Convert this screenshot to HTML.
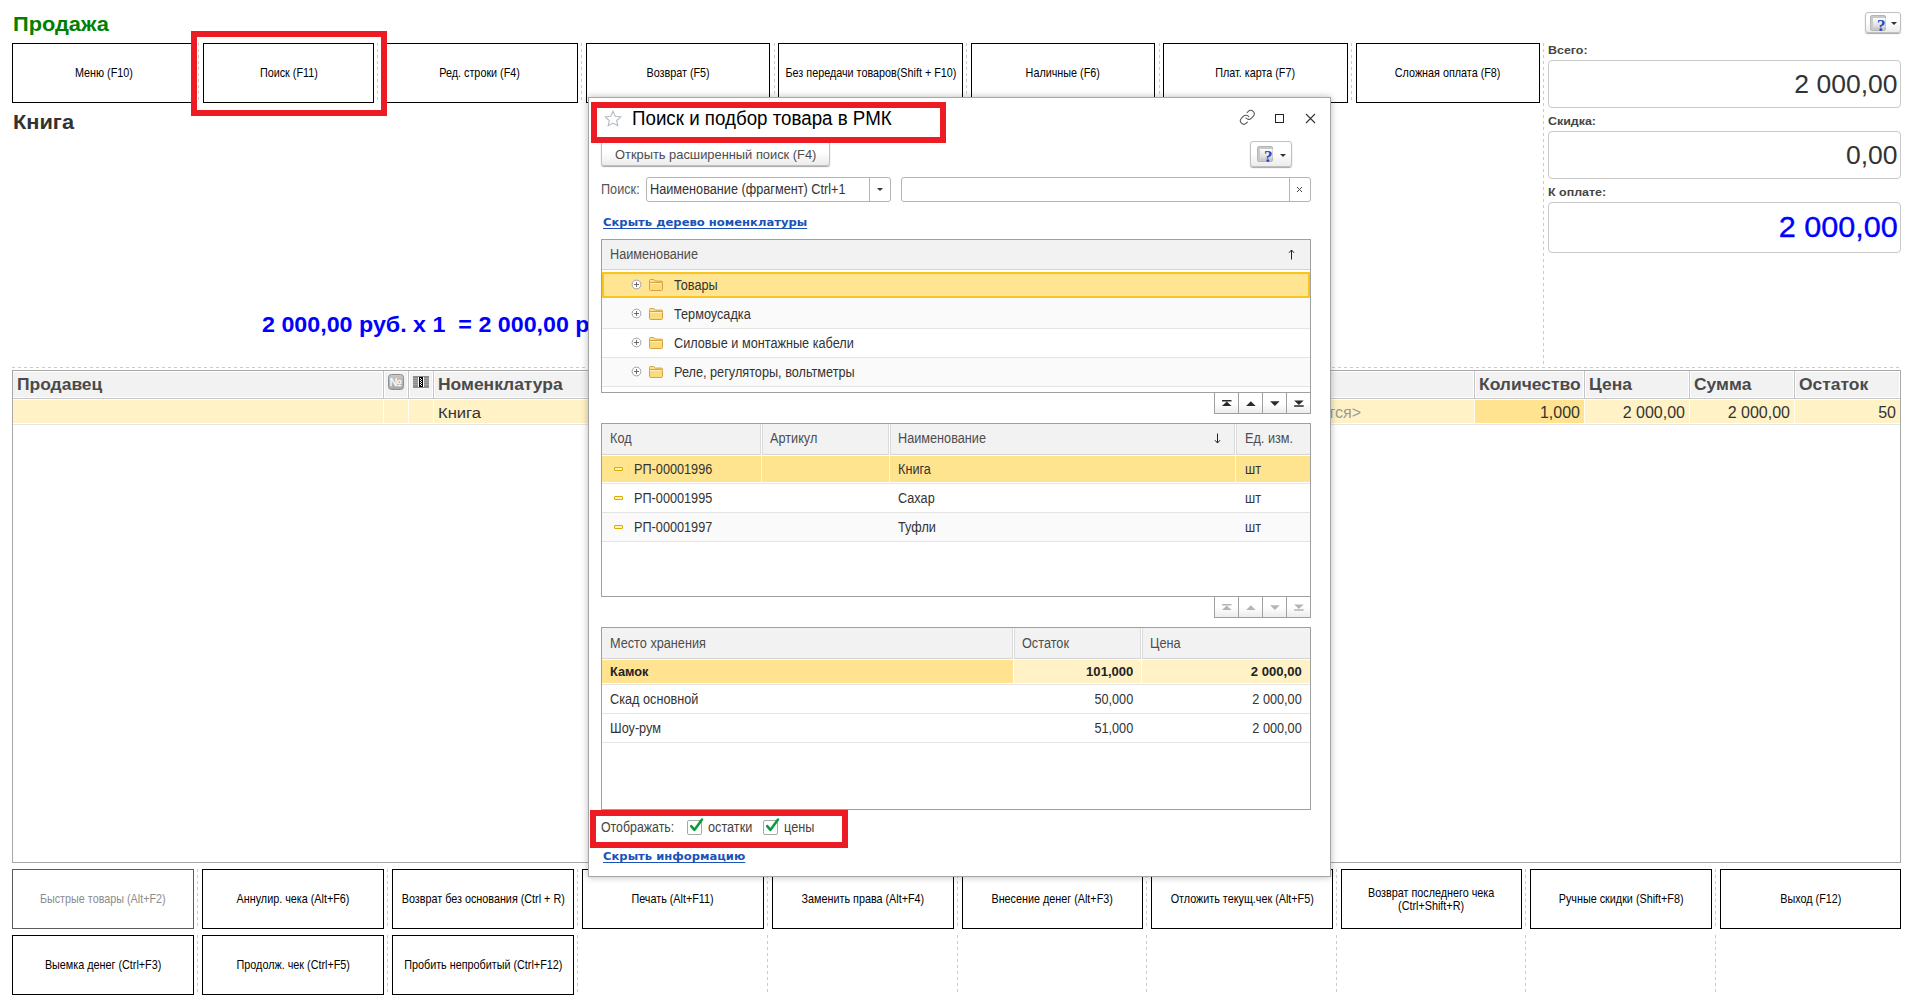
<!DOCTYPE html>
<html lang="ru"><head><meta charset="utf-8"><title>Продажа</title>
<style>
html,body{margin:0;padding:0;background:#fff;}
body{font-family:"Liberation Sans",sans-serif;font-size:13px;color:#333;}
#root{position:relative;width:1920px;height:1005px;overflow:hidden;background:#fff;}
#root div{box-sizing:border-box;}
.pb{position:absolute;border:1px solid #000;background:#fff;display:flex;align-items:center;justify-content:center;text-align:center;font-size:13px;line-height:13px;color:#000;}
.pb span{display:inline-block;transform:scaleX(0.83);white-space:nowrap;position:relative;top:-1px;}
.pb.dis{border-color:#5a5a5a;color:#8c8c8c;}
.vd{position:absolute;width:1px;background:repeating-linear-gradient(to bottom,#cacaca 0,#cacaca 3px,transparent 3px,transparent 6px);}
.hd{position:absolute;height:1px;background:repeating-linear-gradient(to right,#cacaca 0,#cacaca 3px,transparent 3px,transparent 6px);}
.fld{position:absolute;border:1px solid #c8c8c8;border-radius:4px;background:#fff;}
.th{position:absolute;background:#f2f2f2;}
.red{position:absolute;border:6px solid #ed1c24;}
.tbl{position:absolute;border:1px solid #a0a0a0;background:#fff;}
.hl{position:absolute;height:1px;background:#e4e4e4;}
.vl{position:absolute;width:1px;}
.nav{position:absolute;border:1px solid #a0a0a0;background:linear-gradient(#fff,#fff 50%,#ececec);}
.gbtn{position:absolute;border:1px solid #c0c0c0;border-radius:3px;background:linear-gradient(#fff,#fff 45%,#ececec);box-shadow:0 1px 1px rgba(0,0,0,.35);}
</style></head><body><div id="root">

<div style="position:absolute;top:14.27px;font-size:20px;line-height:20px;color:#008000;white-space:pre;font-weight:bold;left:13.00px;transform:scaleX(1.09);transform-origin:left center;">Продажа</div>
<div style="position:absolute;top:112.07px;font-size:20px;line-height:20px;color:#333;white-space:pre;font-weight:bold;left:13.00px;transform:scaleX(1.09);transform-origin:left center;">Книга</div>
<div style="position:absolute;top:314.38px;font-size:22px;line-height:22px;color:#0000ff;white-space:pre;font-weight:bold;left:262.00px;transform:scaleX(1.057);transform-origin:left center;">2 000,00 руб. x 1  = 2 000,00 руб.</div>
<div class="pb" style="left:12px;top:43px;width:183px;height:60px"><span>Меню (F10)</span></div>
<div class="pb" style="left:203px;top:43px;width:171px;height:60px"><span>Поиск (F11)</span></div>
<div class="pb" style="left:382px;top:43px;width:196px;height:60px"><span>Ред. строки (F4)</span></div>
<div class="pb" style="left:586px;top:43px;width:184px;height:60px"><span>Возврат (F5)</span></div>
<div class="pb" style="left:778px;top:43px;width:185px;height:60px"><span>Без передачи товаров(Shift + F10)</span></div>
<div class="pb" style="left:971px;top:43px;width:184px;height:60px"><span>Наличные (F6)</span></div>
<div class="pb" style="left:1163px;top:43px;width:185px;height:60px"><span>Плат. карта (F7)</span></div>
<div class="pb" style="left:1356px;top:43px;width:184px;height:60px"><span>Сложная оплата (F8)</span></div>
<div class="vd" style="left:198px;top:43px;height:60px"></div>
<div class="vd" style="left:377px;top:43px;height:60px"></div>
<div class="vd" style="left:581px;top:43px;height:60px"></div>
<div class="vd" style="left:774px;top:43px;height:60px"></div>
<div class="vd" style="left:966px;top:43px;height:60px"></div>
<div class="vd" style="left:1159px;top:43px;height:60px"></div>
<div class="vd" style="left:1351px;top:43px;height:60px"></div>
<div class="vd" style="left:1543px;top:43px;height:321px"></div>
<div class="hd" style="left:12px;top:367px;width:1889px"></div>
<div style="position:absolute;top:45.19px;font-size:11px;line-height:11px;color:#444;white-space:pre;font-weight:bold;left:1548.00px;transform:scaleX(1.13);transform-origin:left center;">Всего:</div>
<div style="position:absolute;top:116.09px;font-size:11px;line-height:11px;color:#444;white-space:pre;font-weight:bold;left:1548.00px;transform:scaleX(1.13);transform-origin:left center;">Скидка:</div>
<div style="position:absolute;top:187.09px;font-size:11px;line-height:11px;color:#444;white-space:pre;font-weight:bold;left:1548.00px;transform:scaleX(1.13);transform-origin:left center;">К оплате:</div>
<div class="fld" style="left:1548px;top:60px;width:353px;height:48px"></div>
<div class="fld" style="left:1548px;top:131px;width:353px;height:48px"></div>
<div class="fld" style="left:1548px;top:202px;width:353px;height:51px"></div>
<div style="position:absolute;top:71.07px;font-size:26.5px;line-height:26.5px;color:#333;white-space:pre;right:22.50px;">2 000,00</div>
<div style="position:absolute;top:142.17px;font-size:26.5px;line-height:26.5px;color:#333;white-space:pre;right:22.50px;">0,00</div>
<div style="position:absolute;top:212.95px;font-size:29px;line-height:29px;color:#0000ff;white-space:pre;right:22.50px;transform:scaleX(1.055);transform-origin:right center;-webkit-text-stroke:0.35px #0000ff;">2 000,00</div>
<div class="gbtn" style="left:1865px;top:12px;width:36px;height:21px"><svg width="17" height="16" viewBox="0 0 17 16" style="position:absolute;left:4px;top:2px;overflow:visible"><defs><linearGradient id="hg1" x1="0" y1="0" x2="0" y2="1"><stop offset="0" stop-color="#fdfdfd"/><stop offset="1" stop-color="#d8d8d8"/></linearGradient></defs><rect x="0.5" y="0.5" width="15" height="15" rx="1.5" fill="#c9c9c9" stroke="#b5b5b5"/><rect x="3" y="3" width="12.5" height="9.5" fill="url(#hg1)"/><text x="11.3" y="15.5" font-family="Liberation Serif,serif" font-weight="bold" font-size="17" fill="#1f48c8" stroke="#1f48c8" stroke-width="0.1" text-anchor="middle">?</text></svg><div style="position:absolute;left:25px;top:9px;width:0;height:0;border-left:3px solid transparent;border-right:3px solid transparent;border-top:3px solid #333"></div></div>
<div class="tbl" style="left:12px;top:370px;width:1889px;height:493px;border-color:#a8a8a8"></div>
<div class="th" style="left:13px;top:372px;width:369px;height:25px"></div>
<div class="th" style="left:385px;top:372px;width:22px;height:25px"></div>
<div class="th" style="left:410px;top:372px;width:22px;height:25px"></div>
<div class="th" style="left:435px;top:372px;width:1038px;height:25px"></div>
<div class="th" style="left:1476px;top:372px;width:107px;height:25px"></div>
<div class="th" style="left:1586px;top:372px;width:102px;height:25px"></div>
<div class="th" style="left:1691px;top:372px;width:102px;height:25px"></div>
<div class="th" style="left:1796px;top:372px;width:103px;height:25px"></div>
<div class="vl" style="left:383px;top:371px;height:27px;background:#c6c6c6"></div>
<div class="vl" style="left:408px;top:371px;height:27px;background:#c6c6c6"></div>
<div class="vl" style="left:433px;top:371px;height:27px;background:#c6c6c6"></div>
<div class="vl" style="left:1474px;top:371px;height:27px;background:#c6c6c6"></div>
<div class="vl" style="left:1584px;top:371px;height:27px;background:#c6c6c6"></div>
<div class="vl" style="left:1689px;top:371px;height:27px;background:#c6c6c6"></div>
<div class="vl" style="left:1794px;top:371px;height:27px;background:#c6c6c6"></div>
<div style="position:absolute;left:13px;top:398px;width:1887px;height:1px;background:#c6c6c6"></div>
<div style="position:absolute;left:13px;top:400px;width:1887px;height:23px;background:#fff2c6"></div>
<div style="position:absolute;left:1475px;top:400px;width:109px;height:23px;background:#ffe391"></div>
<div class="vl" style="left:383px;top:400px;height:23px;background:#fffdf4"></div>
<div class="vl" style="left:408px;top:400px;height:23px;background:#fffdf4"></div>
<div class="vl" style="left:433px;top:400px;height:23px;background:#fffdf4"></div>
<div class="vl" style="left:1474px;top:400px;height:23px;background:#fffdf4"></div>
<div class="vl" style="left:1584px;top:400px;height:23px;background:#fffdf4"></div>
<div class="vl" style="left:1689px;top:400px;height:23px;background:#fffdf4"></div>
<div class="vl" style="left:1794px;top:400px;height:23px;background:#fffdf4"></div>
<div style="position:absolute;left:13px;top:424px;width:1887px;height:1px;background:#e6e6e6"></div>
<div style="position:absolute;top:377.36px;font-size:16px;line-height:16px;color:#4a4a4a;white-space:pre;font-weight:bold;left:17.30px;transform:scaleX(1.09);transform-origin:left center;">Продавец</div>
<div style="position:absolute;top:377.36px;font-size:16px;line-height:16px;color:#4a4a4a;white-space:pre;font-weight:bold;left:438.30px;transform:scaleX(1.09);transform-origin:left center;">Номенклатура</div>
<div style="position:absolute;top:377.36px;font-size:16px;line-height:16px;color:#4a4a4a;white-space:pre;font-weight:bold;left:1479.00px;transform:scaleX(1.09);transform-origin:left center;">Количество</div>
<div style="position:absolute;top:377.36px;font-size:16px;line-height:16px;color:#4a4a4a;white-space:pre;font-weight:bold;left:1589.00px;transform:scaleX(1.09);transform-origin:left center;">Цена</div>
<div style="position:absolute;top:377.36px;font-size:16px;line-height:16px;color:#4a4a4a;white-space:pre;font-weight:bold;left:1694.00px;transform:scaleX(1.09);transform-origin:left center;">Сумма</div>
<div style="position:absolute;top:377.36px;font-size:16px;line-height:16px;color:#4a4a4a;white-space:pre;font-weight:bold;left:1799.00px;transform:scaleX(1.09);transform-origin:left center;">Остаток</div>
<div style="position:absolute;top:405.48px;font-size:15.5px;line-height:15.5px;color:#333;white-space:pre;left:438.30px;transform:scaleX(1.07);transform-origin:left center;">Книга</div>
<div style="position:absolute;top:405.06px;font-size:16px;line-height:16px;color:#333;white-space:pre;right:340.00px;">1,000</div>
<div style="position:absolute;top:405.06px;font-size:16px;line-height:16px;color:#333;white-space:pre;right:235.00px;">2 000,00</div>
<div style="position:absolute;top:405.06px;font-size:16px;line-height:16px;color:#333;white-space:pre;right:130.00px;">2 000,00</div>
<div style="position:absolute;top:405.06px;font-size:16px;line-height:16px;color:#333;white-space:pre;right:24.00px;">50</div>
<div style="position:absolute;top:405.06px;font-size:16px;line-height:16px;color:#9a9a9a;white-space:pre;right:559.00px;">&lt;не используется&gt;</div>
<svg width="16" height="16" viewBox="0 0 16 16" style="position:absolute;left:388px;top:374px"><defs><linearGradient id="ng" x1="0" y1="0" x2="0" y2="1"><stop offset="0" stop-color="#c8c8c8"/><stop offset="1" stop-color="#a6a6a6"/></linearGradient></defs><rect x="0.5" y="0.5" width="15" height="15" rx="3" fill="url(#ng)" stroke="#8e8e8e"/><text x="1.6" y="12.2" font-family="Liberation Sans,sans-serif" font-size="11.5" fill="#fff" stroke="#fff" stroke-width="0.25">№</text></svg>
<svg width="16" height="12" viewBox="0 0 16 12" style="position:absolute;left:413px;top:376px"><rect x="0" y="0" width="16" height="12" fill="#8c8c8c"/><g stroke="#a4a4a4" stroke-width="1"><path d="M0 2.5h16M0 4.5h16M0 6.5h16M0 8.5h16"/></g><rect x="5" y="1" width="6" height="10" fill="#fff"/><rect x="6" y="1" width="4" height="10" fill="#000"/><g fill="#fff"><rect x="7" y="2" width="1" height="1"/><rect x="8" y="3" width="1" height="1"/><rect x="7" y="4" width="1" height="1"/><rect x="8" y="5" width="1" height="1"/><rect x="7" y="6" width="1" height="1"/><rect x="8" y="7" width="1" height="1"/><rect x="7" y="8" width="1" height="1"/><rect x="8" y="9" width="1" height="1"/></g></svg>
<div class="pb dis" style="left:12px;top:869px;width:182px;height:60px"><span>Быстрые товары (Alt+F2)</span></div>
<div class="pb" style="left:202px;top:869px;width:182px;height:60px"><span>Аннулир. чека (Alt+F6)</span></div>
<div class="pb" style="left:392px;top:869px;width:182px;height:60px"><span>Возврат без основания (Ctrl + R)</span></div>
<div class="pb" style="left:582px;top:869px;width:182px;height:60px"><span>Печать (Alt+F11)</span></div>
<div class="pb" style="left:772px;top:869px;width:182px;height:60px"><span>Заменить права (Alt+F4)</span></div>
<div class="pb" style="left:962px;top:869px;width:181px;height:60px"><span>Внесение денег (Alt+F3)</span></div>
<div class="pb" style="left:1151px;top:869px;width:182px;height:60px"><span>Отложить текущ.чек (Alt+F5)</span></div>
<div class="pb" style="left:1341px;top:869px;width:181px;height:60px"><span><i style="font-style:normal;position:relative;top:1px">Возврат последнего чека<br>(Ctrl+Shift+R)</i></span></div>
<div class="pb" style="left:1530px;top:869px;width:182px;height:60px"><span>Ручные скидки (Shift+F8)</span></div>
<div class="pb" style="left:1720px;top:869px;width:181px;height:60px"><span>Выход (F12)</span></div>
<div class="pb" style="left:12px;top:935px;width:182px;height:60px"><span>Выемка денег (Ctrl+F3)</span></div>
<div class="pb" style="left:202px;top:935px;width:182px;height:60px"><span>Продолж. чек (Ctrl+F5)</span></div>
<div class="pb" style="left:392px;top:935px;width:182px;height:60px"><span>Пробить непробитый (Ctrl+F12)</span></div>
<div class="vd" style="left:197px;top:869px;height:60px"></div><div class="vd" style="left:197px;top:935px;height:60px"></div>
<div class="vd" style="left:387px;top:869px;height:60px"></div><div class="vd" style="left:387px;top:935px;height:60px"></div>
<div class="vd" style="left:577px;top:869px;height:60px"></div><div class="vd" style="left:577px;top:935px;height:60px"></div>
<div class="vd" style="left:767px;top:869px;height:60px"></div><div class="vd" style="left:767px;top:935px;height:60px"></div>
<div class="vd" style="left:957px;top:869px;height:60px"></div><div class="vd" style="left:957px;top:935px;height:60px"></div>
<div class="vd" style="left:1146px;top:869px;height:60px"></div><div class="vd" style="left:1146px;top:935px;height:60px"></div>
<div class="vd" style="left:1336px;top:869px;height:60px"></div><div class="vd" style="left:1336px;top:935px;height:60px"></div>
<div class="vd" style="left:1525px;top:869px;height:60px"></div><div class="vd" style="left:1525px;top:935px;height:60px"></div>
<div class="vd" style="left:1715px;top:869px;height:60px"></div><div class="vd" style="left:1715px;top:935px;height:60px"></div>
<div style="position:absolute;left:588px;top:97px;width:743px;height:780px;background:#fff;border:1px solid #a6a6a6;box-shadow:0 0 7px rgba(0,0,0,.28)"></div>
<svg width="18" height="17" viewBox="0 0 18 17" style="position:absolute;left:604px;top:110px"><path d="M9 1.2l2.3 5 5.4.6-4 3.7 1.1 5.3L9 13.1l-4.8 2.7 1.1-5.3-4-3.7 5.4-.6z" fill="#fff" stroke="#b4bac0" stroke-width="1.1" stroke-linejoin="miter"/></svg>
<div style="position:absolute;top:108.47px;font-size:20px;line-height:20px;color:#000;white-space:pre;left:632.30px;transform:scaleX(0.937);transform-origin:left center;">Поиск и подбор товара в РМК</div>
<svg width="16.6" height="16.6" viewBox="0 0 24 24" style="position:absolute;left:1239.3px;top:109.1px"><g fill="none" stroke="#555" stroke-width="1.5" stroke-linecap="round"><path d="M10 13a5 5 0 0 0 7.54.54l3-3a5 5 0 0 0-7.07-7.07l-1.72 1.71"/><path d="M14 11a5 5 0 0 0-7.54-.54l-3 3a5 5 0 0 0 7.07 7.07l1.71-1.71"/></g></svg>
<div style="position:absolute;left:1275px;top:114px;width:9px;height:9px;border:1px solid #222"></div>
<svg width="11" height="11" viewBox="0 0 11 11" style="position:absolute;left:1305px;top:113px"><path d="M1 1l9 9M10 1l-9 9" stroke="#333" stroke-width="1.1" fill="none"/></svg>
<div class="gbtn" style="left:601px;top:141px;width:229px;height:25px"></div>
<div style="position:absolute;top:147.77px;font-size:13.5px;line-height:13.5px;color:#4d4d4d;white-space:pre;left:615.30px;transform:scaleX(0.953);transform-origin:left center;">Открыть расширенный поиск (F4)</div>
<div class="gbtn" style="left:1250px;top:141px;width:42px;height:26px"><svg width="17" height="16" viewBox="0 0 17 16" style="position:absolute;left:6px;top:4px;overflow:visible"><defs><linearGradient id="hg2" x1="0" y1="0" x2="0" y2="1"><stop offset="0" stop-color="#fdfdfd"/><stop offset="1" stop-color="#d8d8d8"/></linearGradient></defs><rect x="0.5" y="0.5" width="15" height="15" rx="1.5" fill="#c9c9c9" stroke="#b5b5b5"/><rect x="3" y="3" width="12.5" height="9.5" fill="url(#hg2)"/><text x="11.3" y="15.5" font-family="Liberation Serif,serif" font-weight="bold" font-size="17" fill="#1f48c8" stroke="#1f48c8" stroke-width="0.1" text-anchor="middle">?</text></svg><div style="position:absolute;left:29px;top:12px;width:0;height:0;border-left:3px solid transparent;border-right:3px solid transparent;border-top:3px solid #333"></div></div>
<div style="position:absolute;top:183.12px;font-size:13.8px;line-height:13.8px;color:#555;white-space:pre;left:601.40px;transform:scaleX(0.92);transform-origin:left center;">Поиск:</div>
<div class="fld" style="left:646px;top:177px;width:245px;height:25px;border-color:#b4b4b4;border-radius:3px"></div>
<div class="vl" style="left:869px;top:178px;height:23px;background:#b4b4b4"></div>
<div style="position:absolute;left:877px;top:188px;width:0;height:0;border-left:3px solid transparent;border-right:3px solid transparent;border-top:3px solid #333"></div>
<div style="position:absolute;top:183.12px;font-size:13.8px;line-height:13.8px;color:#333;white-space:pre;left:650.20px;transform:scaleX(0.92);transform-origin:left center;">Наименование (фрагмент) Ctrl+1</div>
<div class="fld" style="left:901px;top:177px;width:410px;height:25px;border-color:#b4b4b4;border-radius:3px"></div>
<div class="vl" style="left:1289px;top:178px;height:23px;background:#b4b4b4"></div>
<svg width="7" height="7" viewBox="0 0 7 7" style="position:absolute;left:1296px;top:186px"><path d="M1 1l5 5M6 1l-5 5" stroke="#484848" stroke-width="1" fill="none"/></svg>
<div style="position:absolute;top:217.86px;font-size:10.8px;line-height:10.8px;color:#1a52b8;white-space:pre;font-weight:bold;font-family:'DejaVu Sans', sans-serif;left:603.00px;transform:scaleX(1.072);transform-origin:left center;text-decoration:underline;text-decoration-thickness:1px;text-underline-offset:2px;text-decoration-skip-ink:none;">Скрыть дерево номенклатуры</div>
<div class="tbl" style="left:601px;top:239px;width:710px;height:154px"></div>
<div class="th" style="left:602px;top:240px;width:708px;height:29px"></div>
<div class="hl" style="left:602px;top:269px;width:708px;background:#d4d4d4"></div>
<div style="position:absolute;top:248.32px;font-size:13.8px;line-height:13.8px;color:#4d4d4d;white-space:pre;left:610.20px;transform:scaleX(0.92);transform-origin:left center;">Наименование</div>
<svg width="7" height="11" viewBox="0 0 7 11" style="position:absolute;left:1288px;top:249px"><path d="M3.5 10.5v-9.5M1 3.8l2.5-2.8 2.5 2.8" fill="none" stroke="#222" stroke-width="1"/></svg>
<div style="position:absolute;left:602px;top:272px;width:708px;height:26px;background:#ffe591;border:2px solid #f8c41f"></div>
<div style="position:absolute;left:602px;top:298px;width:708px;height:30px;background:#fafafa"></div>
<div style="position:absolute;left:602px;top:357px;width:708px;height:29px;background:#fafafa"></div>
<div class="hl" style="left:602px;top:328px;width:708px"></div>
<div class="hl" style="left:602px;top:357px;width:708px"></div>
<div class="hl" style="left:602px;top:386px;width:708px"></div>
<svg width="11" height="11" viewBox="0 0 11 11" style="position:absolute;left:631px;top:279px"><circle cx="5.5" cy="5.5" r="4.4" fill="#fff" stroke="#a0a0a0" stroke-width="1"/><path d="M3 5.5h5M5.5 3v5" stroke="#6a6a6a" stroke-width="1"/></svg>
<svg width="14" height="12" viewBox="0 0 14 12" style="position:absolute;left:649px;top:279px"><path d="M0.5 4v-2.5a1 1 0 0 1 1-1h3.3l1.4 1.6h6.3a1 1 0 0 1 1 1v1z" fill="#fbe08a" stroke="#d6a244"/><rect x="0.5" y="3.5" width="13" height="8" rx="1" fill="#fbdc7c" stroke="#d6a244"/><path d="M1.5 4.5h11" stroke="#fff0bc" stroke-width="1"/></svg>
<div style="position:absolute;top:279.12px;font-size:13.8px;line-height:13.8px;color:#333;white-space:pre;left:674.30px;transform:scaleX(0.92);transform-origin:left center;">Товары</div>
<svg width="11" height="11" viewBox="0 0 11 11" style="position:absolute;left:631px;top:308px"><circle cx="5.5" cy="5.5" r="4.4" fill="#fff" stroke="#a0a0a0" stroke-width="1"/><path d="M3 5.5h5M5.5 3v5" stroke="#6a6a6a" stroke-width="1"/></svg>
<svg width="14" height="12" viewBox="0 0 14 12" style="position:absolute;left:649px;top:308px"><path d="M0.5 4v-2.5a1 1 0 0 1 1-1h3.3l1.4 1.6h6.3a1 1 0 0 1 1 1v1z" fill="#fbe08a" stroke="#d6a244"/><rect x="0.5" y="3.5" width="13" height="8" rx="1" fill="#fbdc7c" stroke="#d6a244"/><path d="M1.5 4.5h11" stroke="#fff0bc" stroke-width="1"/></svg>
<div style="position:absolute;top:308.12px;font-size:13.8px;line-height:13.8px;color:#333;white-space:pre;left:674.30px;transform:scaleX(0.92);transform-origin:left center;">Термоусадка</div>
<svg width="11" height="11" viewBox="0 0 11 11" style="position:absolute;left:631px;top:337px"><circle cx="5.5" cy="5.5" r="4.4" fill="#fff" stroke="#a0a0a0" stroke-width="1"/><path d="M3 5.5h5M5.5 3v5" stroke="#6a6a6a" stroke-width="1"/></svg>
<svg width="14" height="12" viewBox="0 0 14 12" style="position:absolute;left:649px;top:337px"><path d="M0.5 4v-2.5a1 1 0 0 1 1-1h3.3l1.4 1.6h6.3a1 1 0 0 1 1 1v1z" fill="#fbe08a" stroke="#d6a244"/><rect x="0.5" y="3.5" width="13" height="8" rx="1" fill="#fbdc7c" stroke="#d6a244"/><path d="M1.5 4.5h11" stroke="#fff0bc" stroke-width="1"/></svg>
<div style="position:absolute;top:337.12px;font-size:13.8px;line-height:13.8px;color:#333;white-space:pre;left:674.30px;transform:scaleX(0.92);transform-origin:left center;">Силовые и монтажные кабели</div>
<svg width="11" height="11" viewBox="0 0 11 11" style="position:absolute;left:631px;top:366px"><circle cx="5.5" cy="5.5" r="4.4" fill="#fff" stroke="#a0a0a0" stroke-width="1"/><path d="M3 5.5h5M5.5 3v5" stroke="#6a6a6a" stroke-width="1"/></svg>
<svg width="14" height="12" viewBox="0 0 14 12" style="position:absolute;left:649px;top:366px"><path d="M0.5 4v-2.5a1 1 0 0 1 1-1h3.3l1.4 1.6h6.3a1 1 0 0 1 1 1v1z" fill="#fbe08a" stroke="#d6a244"/><rect x="0.5" y="3.5" width="13" height="8" rx="1" fill="#fbdc7c" stroke="#d6a244"/><path d="M1.5 4.5h11" stroke="#fff0bc" stroke-width="1"/></svg>
<div style="position:absolute;top:366.12px;font-size:13.8px;line-height:13.8px;color:#333;white-space:pre;left:674.30px;transform:scaleX(0.92);transform-origin:left center;">Реле, регуляторы, вольтметры</div>
<div class="nav" style="left:1214px;top:392px;width:97px;height:22px"></div>
<div class="vl" style="left:1238px;top:393px;height:20px;background:#a0a0a0"></div>
<div class="vl" style="left:1262px;top:393px;height:20px;background:#a0a0a0"></div>
<div class="vl" style="left:1286px;top:393px;height:20px;background:#a0a0a0"></div>
<svg width="97" height="22" viewBox="0 0 97 22" style="position:absolute;left:1214px;top:392px" fill="#2a2a2a"><path d="M8 8h9.5v1.5h-9.5zM12.75 9.6l4.75 4.4h-9.5z"/><path d="M36.9 9.2l4.75 4.8h-9.5z"/><path d="M60.9 14l4.75-4.8h-9.5z"/><path d="M84.9 13l4.75-4.4h-9.5zM80.15 13.2h9.5v1.5h-9.5z"/></svg>
<div class="tbl" style="left:601px;top:423px;width:710px;height:174px"></div>
<div class="th" style="left:602px;top:424px;width:708px;height:30px"></div>
<div class="hl" style="left:602px;top:454px;width:708px;background:#d4d4d4"></div>
<div class="vl" style="left:760px;top:424px;height:30px;background:#dadada"></div><div class="vl" style="left:761px;top:424px;height:59px;background:#fff"></div><div class="vl" style="left:762px;top:424px;height:30px;background:#dadada"></div>
<div class="vl" style="left:888px;top:424px;height:30px;background:#dadada"></div><div class="vl" style="left:889px;top:424px;height:59px;background:#fff"></div><div class="vl" style="left:890px;top:424px;height:30px;background:#dadada"></div>
<div class="vl" style="left:1234px;top:424px;height:30px;background:#dadada"></div><div class="vl" style="left:1235px;top:424px;height:59px;background:#fff"></div><div class="vl" style="left:1236px;top:424px;height:30px;background:#dadada"></div>
<div style="position:absolute;left:602px;top:456px;width:708px;height:26px;background:#ffe48f"></div>
<div class="vl" style="left:761px;top:456px;height:26px;background:#fff6d8"></div>
<div class="vl" style="left:889px;top:456px;height:26px;background:#fff6d8"></div>
<div class="vl" style="left:1235px;top:456px;height:26px;background:#fff6d8"></div>
<div style="position:absolute;left:602px;top:513px;width:708px;height:28px;background:#fafafa"></div>
<div class="hl" style="left:602px;top:483px;width:708px"></div>
<div class="hl" style="left:602px;top:512px;width:708px"></div>
<div class="hl" style="left:602px;top:541px;width:708px"></div>
<div style="position:absolute;top:432.32px;font-size:13.8px;line-height:13.8px;color:#4d4d4d;white-space:pre;left:610.20px;transform:scaleX(0.92);transform-origin:left center;">Код</div>
<div style="position:absolute;top:432.32px;font-size:13.8px;line-height:13.8px;color:#4d4d4d;white-space:pre;left:770.20px;transform:scaleX(0.92);transform-origin:left center;">Артикул</div>
<div style="position:absolute;top:432.32px;font-size:13.8px;line-height:13.8px;color:#4d4d4d;white-space:pre;left:898.00px;transform:scaleX(0.92);transform-origin:left center;">Наименование</div>
<div style="position:absolute;top:432.32px;font-size:13.8px;line-height:13.8px;color:#4d4d4d;white-space:pre;left:1244.50px;transform:scaleX(0.92);transform-origin:left center;">Ед. изм.</div>
<svg width="7" height="11" viewBox="0 0 7 11" style="position:absolute;left:1214px;top:433px"><path d="M3.5 0.5v9.5M1 7.2l2.5 2.8 2.5-2.8" fill="none" stroke="#222" stroke-width="1"/></svg>
<svg width="10" height="5" viewBox="0 0 10 5" style="position:absolute;left:614px;top:466.6px"><rect x="0.5" y="0.5" width="8" height="3" rx="0.4" fill="#fff3b8" stroke="#d8ae00"/></svg>
<div style="position:absolute;top:462.92px;font-size:13.8px;line-height:13.8px;color:#333;white-space:pre;left:634.20px;transform:scaleX(0.92);transform-origin:left center;">РП-00001996</div>
<div style="position:absolute;top:462.92px;font-size:13.8px;line-height:13.8px;color:#333;white-space:pre;left:898.00px;transform:scaleX(0.92);transform-origin:left center;">Книга</div>
<div style="position:absolute;top:462.92px;font-size:13.8px;line-height:13.8px;color:#333;white-space:pre;left:1244.50px;transform:scaleX(0.92);transform-origin:left center;">шт</div>
<svg width="10" height="5" viewBox="0 0 10 5" style="position:absolute;left:614px;top:495.6px"><rect x="0.5" y="0.5" width="8" height="3" rx="0.4" fill="#fff3b8" stroke="#d8ae00"/></svg>
<div style="position:absolute;top:491.92px;font-size:13.8px;line-height:13.8px;color:#333;white-space:pre;left:634.20px;transform:scaleX(0.92);transform-origin:left center;">РП-00001995</div>
<div style="position:absolute;top:491.92px;font-size:13.8px;line-height:13.8px;color:#333;white-space:pre;left:898.00px;transform:scaleX(0.92);transform-origin:left center;">Сахар</div>
<div style="position:absolute;top:491.92px;font-size:13.8px;line-height:13.8px;color:#333;white-space:pre;left:1244.50px;transform:scaleX(0.92);transform-origin:left center;">шт</div>
<svg width="10" height="5" viewBox="0 0 10 5" style="position:absolute;left:614px;top:524.6px"><rect x="0.5" y="0.5" width="8" height="3" rx="0.4" fill="#fff3b8" stroke="#d8ae00"/></svg>
<div style="position:absolute;top:520.92px;font-size:13.8px;line-height:13.8px;color:#333;white-space:pre;left:634.20px;transform:scaleX(0.92);transform-origin:left center;">РП-00001997</div>
<div style="position:absolute;top:520.92px;font-size:13.8px;line-height:13.8px;color:#333;white-space:pre;left:898.00px;transform:scaleX(0.92);transform-origin:left center;">Туфли</div>
<div style="position:absolute;top:520.92px;font-size:13.8px;line-height:13.8px;color:#333;white-space:pre;left:1244.50px;transform:scaleX(0.92);transform-origin:left center;">шт</div>
<div class="nav" style="left:1214px;top:596px;width:97px;height:22px"></div>
<div class="vl" style="left:1238px;top:597px;height:20px;background:#a0a0a0"></div>
<div class="vl" style="left:1262px;top:597px;height:20px;background:#a0a0a0"></div>
<div class="vl" style="left:1286px;top:597px;height:20px;background:#a0a0a0"></div>
<svg width="97" height="22" viewBox="0 0 97 22" style="position:absolute;left:1214px;top:596px" fill="#b4b4b4"><path d="M8 8h9.5v1.5h-9.5zM12.75 9.6l4.75 4.4h-9.5z"/><path d="M36.9 9.2l4.75 4.8h-9.5z"/><path d="M60.9 14l4.75-4.8h-9.5z"/><path d="M84.9 13l4.75-4.4h-9.5zM80.15 13.2h9.5v1.5h-9.5z"/></svg>
<div class="tbl" style="left:601px;top:627px;width:710px;height:183px"></div>
<div class="th" style="left:602px;top:628px;width:708px;height:30px"></div>
<div class="hl" style="left:602px;top:658px;width:708px;background:#d4d4d4"></div>
<div class="vl" style="left:1012px;top:628px;height:30px;background:#dadada"></div><div class="vl" style="left:1013px;top:628px;height:56px;background:#fff"></div><div class="vl" style="left:1014px;top:628px;height:30px;background:#dadada"></div>
<div class="vl" style="left:1140px;top:628px;height:30px;background:#dadada"></div><div class="vl" style="left:1141px;top:628px;height:56px;background:#fff"></div><div class="vl" style="left:1142px;top:628px;height:30px;background:#dadada"></div>
<div style="position:absolute;left:602px;top:660px;width:411px;height:23px;background:#ffe391"></div>
<div style="position:absolute;left:1014px;top:660px;width:127px;height:23px;background:#fff2c6"></div>
<div style="position:absolute;left:1142px;top:660px;width:168px;height:23px;background:#fff2c6"></div>
<div class="hl" style="left:602px;top:684px;width:708px"></div>
<div class="hl" style="left:602px;top:713px;width:708px"></div>
<div class="hl" style="left:602px;top:742px;width:708px"></div>
<div style="position:absolute;top:636.52px;font-size:13.8px;line-height:13.8px;color:#4d4d4d;white-space:pre;left:610.20px;transform:scaleX(0.92);transform-origin:left center;">Место хранения</div>
<div style="position:absolute;top:636.52px;font-size:13.8px;line-height:13.8px;color:#4d4d4d;white-space:pre;left:1022.40px;transform:scaleX(0.92);transform-origin:left center;">Остаток</div>
<div style="position:absolute;top:636.52px;font-size:13.8px;line-height:13.8px;color:#4d4d4d;white-space:pre;left:1150.30px;transform:scaleX(0.92);transform-origin:left center;">Цена</div>
<div style="position:absolute;top:665.74px;font-size:12px;line-height:12px;color:#222;white-space:pre;font-weight:bold;left:610.20px;transform:scaleX(1.06);transform-origin:left center;">Камок</div>
<div style="position:absolute;top:665.74px;font-size:12px;line-height:12px;color:#222;white-space:pre;font-weight:bold;right:787.00px;transform:scaleX(1.09);transform-origin:right center;">101,000</div>
<div style="position:absolute;top:665.74px;font-size:12px;line-height:12px;color:#222;white-space:pre;font-weight:bold;right:618.00px;transform:scaleX(1.09);transform-origin:right center;">2 000,00</div>
<div style="position:absolute;top:693.12px;font-size:13.8px;line-height:13.8px;color:#333;white-space:pre;left:610.20px;transform:scaleX(0.92);transform-origin:left center;">Скад основной</div>
<div style="position:absolute;top:693.12px;font-size:13.8px;line-height:13.8px;color:#333;white-space:pre;right:787.00px;transform:scaleX(0.92);transform-origin:right center;">50,000</div>
<div style="position:absolute;top:693.12px;font-size:13.8px;line-height:13.8px;color:#333;white-space:pre;right:618.00px;transform:scaleX(0.92);transform-origin:right center;">2 000,00</div>
<div style="position:absolute;top:722.12px;font-size:13.8px;line-height:13.8px;color:#333;white-space:pre;left:610.20px;transform:scaleX(0.92);transform-origin:left center;">Шоу-рум</div>
<div style="position:absolute;top:722.12px;font-size:13.8px;line-height:13.8px;color:#333;white-space:pre;right:787.00px;transform:scaleX(0.92);transform-origin:right center;">51,000</div>
<div style="position:absolute;top:722.12px;font-size:13.8px;line-height:13.8px;color:#333;white-space:pre;right:618.00px;transform:scaleX(0.92);transform-origin:right center;">2 000,00</div>
<div style="position:absolute;top:821.02px;font-size:13.8px;line-height:13.8px;color:#444;white-space:pre;left:601.00px;transform:scaleX(0.895);transform-origin:left center;">Отображать:</div>
<div style="position:absolute;left:687px;top:820px;width:15px;height:15px;border:1px solid #a8a8a8;border-radius:2px;background:#fff"></div><svg width="17" height="17" viewBox="0 0 17 17" style="position:absolute;left:687px;top:817px"><path d="M4.2 9.1L7.4 12.9L15 2.6" fill="none" stroke="#0a9a3c" stroke-width="2.5" stroke-linejoin="round" stroke-linecap="round"/></svg>
<div style="position:absolute;top:821.02px;font-size:13.8px;line-height:13.8px;color:#444;white-space:pre;left:707.60px;transform:scaleX(0.92);transform-origin:left center;">остатки</div>
<div style="position:absolute;left:763px;top:820px;width:15px;height:15px;border:1px solid #a8a8a8;border-radius:2px;background:#fff"></div><svg width="17" height="17" viewBox="0 0 17 17" style="position:absolute;left:763px;top:817px"><path d="M4.2 9.1L7.4 12.9L15 2.6" fill="none" stroke="#0a9a3c" stroke-width="2.5" stroke-linejoin="round" stroke-linecap="round"/></svg>
<div style="position:absolute;top:821.02px;font-size:13.8px;line-height:13.8px;color:#444;white-space:pre;left:784.20px;transform:scaleX(0.92);transform-origin:left center;">цены</div>
<div style="position:absolute;top:852.06px;font-size:10.8px;line-height:10.8px;color:#1a52b8;white-space:pre;font-weight:bold;font-family:'DejaVu Sans', sans-serif;left:603.40px;transform:scaleX(1.072);transform-origin:left center;text-decoration:underline;text-decoration-thickness:1px;text-underline-offset:2px;text-decoration-skip-ink:none;">Скрыть информацию</div>
<div class="red" style="left:191px;top:31px;width:196px;height:85px"></div>
<div class="red" style="left:591px;top:102px;width:355px;height:41px"></div>
<div class="red" style="left:590px;top:810px;width:258px;height:38px"></div>
</div></body></html>
